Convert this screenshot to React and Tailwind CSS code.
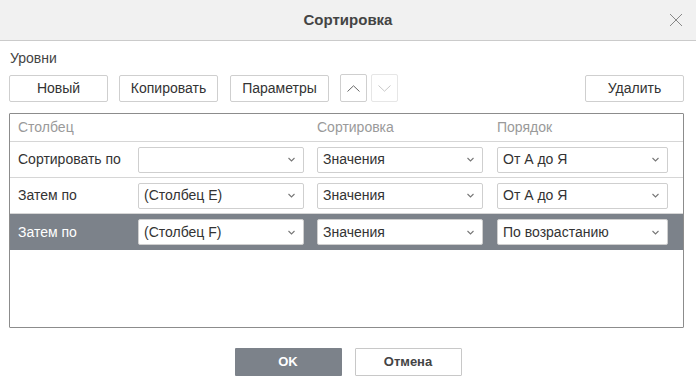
const font = { fontFamily: '"Liberation Sans", Arial, sans-serif' }

function Chevron({ className = '' }) {
  return (
    <svg width="7" height="5" viewBox="0 0 7 5" className={className}>
      <path d="M0.5 1 L3.5 4 L6.5 1" fill="none" stroke="currentColor" strokeWidth="1.1" />
    </svg>
  )
}

function Select({ value, width }) {
  return (
    <div
      className={`flex h-[26px] items-center justify-between rounded-[2px] border border-[#cfcfcf] bg-white pl-[5px] pr-[8px] text-[14px] text-[#333] ${width}`}
    >
      <span>{value}</span>
      <Chevron className="text-[#777]" />
    </div>
  )
}

function ToolButton({ children, width }) {
  return (
    <button
      type="button"
      className={`h-[27px] rounded-[2px] border border-[#cfcfcf] bg-white text-[14px] text-[#333] ${width}`}
    >
      {children}
    </button>
  )
}

const rows = [
  { label: 'Сортировать по', column: '', sort: 'Значения', order: 'От А до Я' },
  { label: 'Затем по', column: '(Столбец E)', sort: 'Значения', order: 'От А до Я' },
  { label: 'Затем по', column: '(Столбец F)', sort: 'Значения', order: 'По возрастанию', selected: true },
]

export default function App() {
  return (
    <div className="h-[383px] w-[696px] bg-white text-[#333]" style={font}>
      <div className="relative flex h-[41px] items-center justify-center border-b border-[#cbcbcb] bg-[#f1f1f1]">
        <span className="text-[15px] font-bold text-[#444]">Сортировка</span>
        <svg width="14" height="14" viewBox="0 0 14 14" className="absolute right-[13px] top-[13px] text-[#888]">
          <path d="M1 1 L13 13 M13 1 L1 13" stroke="currentColor" strokeWidth="1" />
        </svg>
      </div>

      <div className="px-[9px] pt-[10px]">
        <div className="pl-[1px] text-[14px] leading-[15px] text-[#444]">Уровни</div>

        <div className="mt-[8px] flex items-center">
          <ToolButton width="w-[99px]">Новый</ToolButton>
          <div className="ml-[11px]">
            <ToolButton width="w-[99px]">Копировать</ToolButton>
          </div>
          <div className="ml-[12px]">
            <ToolButton width="w-[99px]">Параметры</ToolButton>
          </div>
          <button
            type="button"
            className="ml-[11px] flex h-[28px] w-[27px] items-center justify-center rounded-[2px] border border-[#cfcfcf] bg-white text-[#666]"
          >
            <svg width="13" height="7" viewBox="0 0 13 7">
              <path d="M0.5 6.5 L6.5 0.8 L12.5 6.5" fill="none" stroke="currentColor" strokeWidth="1" />
            </svg>
          </button>
          <button
            type="button"
            className="ml-[4px] flex h-[28px] w-[27px] items-center justify-center rounded-[2px] border border-[#e6e6e6] bg-white text-[#c8c8c8]"
          >
            <svg width="13" height="7" viewBox="0 0 13 7">
              <path d="M0.5 0.5 L6.5 6.2 L12.5 0.5" fill="none" stroke="currentColor" strokeWidth="1" />
            </svg>
          </button>
          <div className="ml-auto mr-[3px]">
            <ToolButton width="w-[99px]">Удалить</ToolButton>
          </div>
        </div>

        <div className="mt-[11px] h-[215px] w-[675px] rounded-[1px] border border-[#8c8c8c]">
          <div className="flex h-[28px] items-center border-b border-[#d6d6d6] pl-[8px] text-[14px] text-[#9a9a9a]">
            <span className="w-[299px]">Столбец</span>
            <span className="w-[180px]">Сортировка</span>
            <span>Порядок</span>
          </div>
          {rows.map((row, i) => (
            <div
              key={i}
              className={`flex h-[36px] items-center pl-[8px] text-[14px] ${
                row.selected ? 'bg-[#7c828a] text-white' : 'border-b border-[#d6d6d6] text-[#333]'
              }`}
            >
              <span className="w-[120px]">{row.label}</span>
              <Select value={row.column} width="w-[166px]" />
              <div className="ml-[13px]">
                <Select value={row.sort} width="w-[166px]" />
              </div>
              <div className="ml-[14px]">
                <Select value={row.order} width="w-[171px]" />
              </div>
            </div>
          ))}
        </div>
      </div>

      <div className="mt-[20px] flex justify-center gap-[13px]">
        <button
          type="button"
          className="h-[28px] w-[107px] rounded-[1px] bg-[#7c828a] text-[13px] font-bold text-white"
        >
          OK
        </button>
        <button
          type="button"
          className="h-[28px] w-[107px] rounded-[1px] border border-[#c8c8c8] bg-white text-[13px] font-bold text-[#444]"
        >
          Отмена
        </button>
      </div>
    </div>
  )
}
